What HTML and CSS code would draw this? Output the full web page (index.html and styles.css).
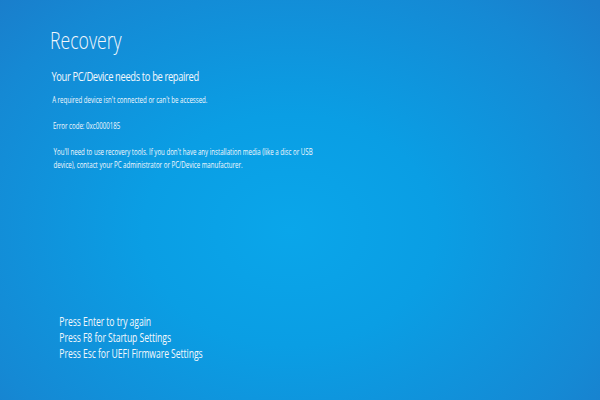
FILE: index.html
```html
<!DOCTYPE html>
<html>
<head>
<meta charset="utf-8">
<link rel="stylesheet" href="styles.css">
</head>
<body>
<div class="screen">
  <div class="top">
    <h1 class="title">Recovery</h1>
    <h2 class="subtitle">Your PC/Device needs to be repaired</h2>
    <p class="msg">A required device isn't connected or can't be accessed.</p>
    <p class="msg code">Error code: 0xc0000185</p>
    <p class="msg tools">You'll need to use recovery tools. If you don't have any installation media (like a disc or USB<br>device), contact your PC administrator or PC/Device manufacturer.</p>
  </div>
  <div class="options">
    <p class="opt">Press Enter to try again</p>
    <p class="opt">Press F8 for Startup Settings</p>
    <p class="opt">Press Esc for UEFI Firmware Settings</p>
  </div>
</div>
</body>
</html>
```

FILE: styles.css
```css
html, body {
  margin: 0;
  padding: 0;
}
body {
  width: 600px;
  height: 400px;
  overflow: hidden;
  background: radial-gradient(ellipse 420px 330px at 290px 230px, #0aa6ea 0%, #0a9ee4 35%, #1589d4 80%, #1a7dcb 100%);
  font-family: "Open Sans", "Noto Sans", sans-serif;
  color: #f4f8fc;
}
.screen {
  height: 400px;
  display: flex;
  flex-direction: column;
  box-sizing: border-box;
  padding: 25px 0 0 50px;
}
.top, .options {
  transform-origin: 0 0;
  transform: scaleX(0.72);
}
.title {
  margin: 0;
  font-weight: 300;
  font-size: 24.5px;
  line-height: 30px;
}
.subtitle {
  margin: 12px 0 0 2px;
  font-weight: 400;
  font-size: 13px;
  letter-spacing: -0.5px;
  line-height: 18px;
}
.msg {
  margin: 8px 0 0 3px;
  font-size: 8.5px;
  line-height: 13px;
}
.code {
  margin-top: 13px;
  margin-left: 4px;
}
.tools {
  margin-top: 13px;
  margin-left: 5px;
}
.options {
  margin-top: auto;
  margin-bottom: 38px;
  padding-left: 13px;
}
.opt {
  margin: 0;
  font-size: 12px;
  letter-spacing: -0.1px;
  line-height: 16px;
}
```
